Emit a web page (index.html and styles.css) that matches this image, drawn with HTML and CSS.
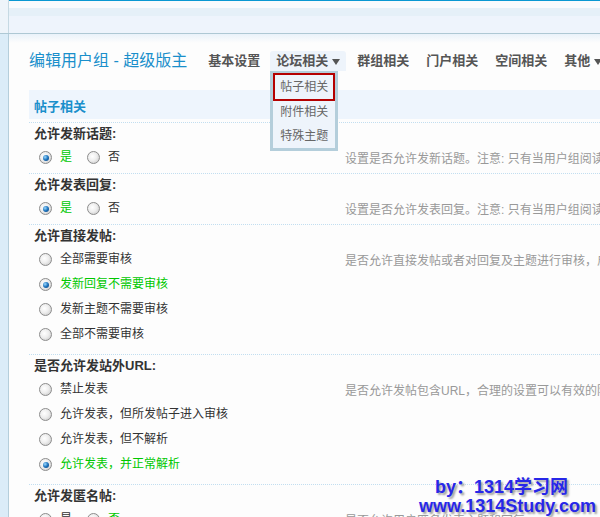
FILE: index.html
```html
<!DOCTYPE html>
<html>
<head>
    <meta charset="UTF-8">
    <title>编辑用户组 - 超级版主</title>
    <link rel="stylesheet" href="styles.css">
</head>
<body>
    <div class="top">
        <div class="side"></div>
        <div class="topMain"></div>
    </div>
    <div class="page">
        <div class="side"></div>
        <div class="main">
            <div class="head">
                <h2 class="title">编辑用户组 - 超级版主</h2>
                <ul class="tabs">
                    <li>基本设置</li>
                    <li class="current">论坛相关<span class="arrow"></span>
                        <ul class="menu">
                            <li class="active">帖子相关</li>
                            <li>附件相关</li>
                            <li>特殊主题</li>
                        </ul>
                    </li>
                    <li>群组相关</li>
                    <li>门户相关</li>
                    <li>空间相关</li>
                    <li>其他<span class="arrow"></span></li>
                </ul>
            </div>

            <div class="sectionTitle">帖子相关</div>

            <div class="row">
                <div class="label">允许发新话题:</div>
                <div class="field">
                    <ul class="options inline">
                        <li class="checked"><span class="radio"></span>是</li>
                        <li><span class="radio"></span>否</li>
                    </ul>
                    <div class="tip">设置是否允许发新话题。注意: 只有当用户组阅读权限高于 0 时，才能发新话题</div>
                </div>
            </div>

            <div class="row">
                <div class="label">允许发表回复:</div>
                <div class="field">
                    <ul class="options inline">
                        <li class="checked"><span class="radio"></span>是</li>
                        <li><span class="radio"></span>否</li>
                    </ul>
                    <div class="tip">设置是否允许发表回复。注意: 只有当用户组阅读权限高于 0 时，才能发表回复</div>
                </div>
            </div>

            <div class="row">
                <div class="label">允许直接发帖:</div>
                <div class="field">
                    <ul class="options list">
                        <li><span class="radio"></span>全部需要审核</li>
                        <li class="checked"><span class="radio"></span>发新回复不需要审核</li>
                        <li><span class="radio"></span>发新主题不需要审核</li>
                        <li><span class="radio"></span>全部不需要审核</li>
                    </ul>
                    <div class="tip">是否允许直接发帖或者对回复及主题进行审核，启用审核后需要版主审核通过才能显示</div>
                </div>
            </div>

            <div class="row">
                <div class="label">是否允许发站外URL:</div>
                <div class="field">
                    <ul class="options list">
                        <li><span class="radio"></span>禁止发表</li>
                        <li><span class="radio"></span>允许发表，但所发帖子进入审核</li>
                        <li><span class="radio"></span>允许发表，但不解析</li>
                        <li class="checked"><span class="radio"></span>允许发表，并正常解析</li>
                    </ul>
                    <div class="tip">是否允许发帖包含URL，合理的设置可以有效的防止广告</div>
                </div>
            </div>

            <div class="row">
                <div class="label">允许发匿名帖:</div>
                <div class="field">
                    <ul class="options inline">
                        <li><span class="radio"></span>是</li>
                        <li class="checked"><span class="radio"></span>否</li>
                    </ul>
                    <div class="tip">是否允许用户匿名发表主题和回复</div>
                </div>
            </div>
        </div>
    </div>

    <div class="watermark">
        <div class="wmTop">by：1314学习网</div>
        <div>www.1314Study.com</div>
    </div>
</body>
</html>
```

FILE: styles.css
```css
html, body {
    margin: 0;
    padding: 0;
    height: 517px;
    overflow: hidden;
}
body {
    position: relative;
    background: #fdfdfd;
    font-family: "Liberation Sans", "Noto Sans CJK SC", sans-serif;
    font-size: 12px;
    color: #333;
}
ul {
    list-style: none;
    margin: 0;
    padding: 0;
}
.top {
    display: flex;
    height: 33px;
    border-bottom: 1px solid #aec8d4;
}
.top .side {
    background: #eef4fa;
    border-right-color: #c6d9e3;
}
.side {
    width: 8px;
    flex: none;
    background: #dbecf8;
    border-right: 1px solid #b5cedb;
}
.topMain {
    flex: 1;
    border-top: 1px solid #0a98d2;
    background: linear-gradient(#f9fbfd 0, #f9fbfd 7px, #e5f0f8 7px, #e5f0f8 15px, #eef4fc 15px);
}
.page {
    display: flex;
    height: 483px;
}
.main {
    flex: 1;
    padding-left: 20px;
    background: linear-gradient(#eaf2fa, #fdfdfd 9px);
    min-width: 0;
}
.head {
    display: flex;
    align-items: center;
    height: 20px;
    padding-top: 17px;
}
.title {
    margin: 0 15px 0 0;
    font-size: 16px;
    font-weight: normal;
    line-height: 20px;
    color: #1a8fcb;
    white-space: nowrap;
}
.tabs {
    display: flex;
    white-space: nowrap;
}
.tabs > li {
    position: relative;
    padding: 0 6px;
    margin-right: 5px;
    line-height: 20px;
    font-size: 13px;
    font-weight: bold;
    color: #555;
}
.tabs > li:first-child {
    margin-right: 4px;
}
.tabs > li.current {
    background: #eef4fb;
    border-radius: 3px 3px 0 0;
}
.arrow {
    display: inline-block;
    margin-left: 4px;
    vertical-align: middle;
    border-top: 6px solid #555;
    border-left: 4px solid transparent;
    border-right: 4px solid transparent;
}
.menu {
    position: absolute;
    top: 20px;
    left: 0;
    width: 62px;
    border: 3px solid #b4cedb;
    border-top-width: 2px;
    background: #eef4fb;
    z-index: 2;
}
.menu li {
    padding: 0 5px;
    border: 2px solid transparent;
    line-height: 20px;
    font-size: 12px;
    font-weight: normal;
    color: #666;
}
.menu li.active {
    border-color: #b50000;
    line-height: 24px;
    margin-bottom: -1px;
}
.sectionTitle {
    margin-top: 19px;
    height: 25px;
    padding: 4px 0 0 5px;
    line-height: 25px;
    background: #eef5fd;
    font-size: 13px;
    font-weight: bold;
    color: #1a8fcb;
}
.row {
    border-top: 1px dotted #c2def0;
}
.sectionTitle + .row {
    margin-top: 3px;
}
.label {
    height: 22px;
    padding-left: 5px;
    line-height: 22px;
    font-size: 13px;
    font-weight: bold;
    color: #333;
    white-space: nowrap;
}
.field {
    display: flex;
}
.options {
    width: 306px;
    flex: none;
    padding-left: 10px;
}
.options.inline {
    display: flex;
    padding-bottom: 3px;
}
.options.list {
    padding-bottom: 7px;
}
.options li {
    display: flex;
    align-items: center;
    height: 25px;
    line-height: 25px;
    white-space: nowrap;
}
.options.inline li {
    margin-right: 15px;
}
.options li.checked {
    color: #00c800;
}
.radio {
    display: inline-flex;
    align-items: center;
    justify-content: center;
    width: 11px;
    height: 11px;
    margin-right: 8px;
    border: 1px solid #8c8c8c;
    border-radius: 50%;
    background: radial-gradient(circle at 40% 40%, #ffffff 0, #eeeeee 45%, #c2c2c2 100%);
}
.checked .radio::after {
    content: "";
    width: 6px;
    height: 6px;
    border-radius: 50%;
    background: radial-gradient(circle at 35% 35%, #9ad8ff 0, #1c72bb 50%, #0a3c76 100%);
}
.tip {
    padding-top: 2px;
    line-height: 25px;
    color: #999;
    white-space: nowrap;
}
.watermark {
    position: absolute;
    right: 4px;
    bottom: 1px;
    text-align: center;
    font-family: "Liberation Sans", "Noto Sans CJK SC", sans-serif;
    font-size: 18px;
    font-weight: bold;
    line-height: 19px;
    color: #2727e8;
    text-shadow: 2px 2px 2px #a0a0a0;
}
.wmTop {
    padding-right: 12px;
}
```
